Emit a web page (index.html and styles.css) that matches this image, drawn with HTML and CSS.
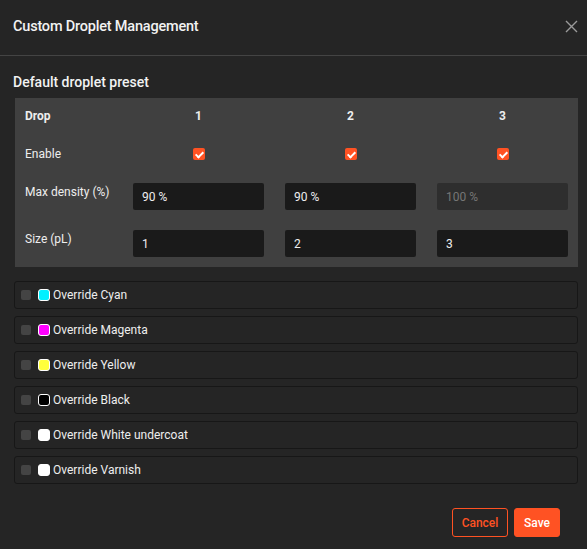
FILE: index.html
```html
<!DOCTYPE html>
<html lang="en">
<head>
    <meta charset="UTF-8">
    <meta name="viewport" content="width=device-width, initial-scale=1.0">
    <title>Custom Droplet Management</title>
    <link rel="stylesheet" href="styles.css">
</head>
<body>
    <div class="dialog">
        <div class="dialog-header">
            <h1 class="dialog-title">Custom Droplet Management</h1>
            <button class="btn-close" aria-label="Close">
                <svg width="13" height="13" viewBox="0 0 13 13">
                    <path d="M1 1 L12 12 M12 1 L1 12" stroke="#9a9a9a" stroke-width="1.4" fill="none"/>
                </svg>
            </button>
        </div>

        <div class="dialog-body">
            <h2 class="section-title">Default droplet preset</h2>

            <div class="preset">
                <div class="cell-label head">Drop</div>
                <div class="cell-center head">1</div>
                <div class="cell-center head">2</div>
                <div class="cell-center head">3</div>

                <div class="cell-label">Enable</div>
                <div class="cell-center"><span class="check on"></span></div>
                <div class="cell-center"><span class="check on"></span></div>
                <div class="cell-center"><span class="check on"></span></div>

                <div class="cell-label top">Max density (%)</div>
                <input class="field" type="text" value="90 %">
                <input class="field" type="text" value="90 %">
                <input class="field" type="text" value="100 %" disabled>

                <div class="cell-label top">Size (pL)</div>
                <input class="field" type="text" value="1">
                <input class="field" type="text" value="2">
                <input class="field" type="text" value="3">
            </div>

            <div class="overrides">
                <div class="override-row">
                    <span class="check"></span>
                    <span class="swatch cyan"></span>
                    <span class="override-name">Override Cyan</span>
                </div>
                <div class="override-row">
                    <span class="check"></span>
                    <span class="swatch magenta"></span>
                    <span class="override-name">Override Magenta</span>
                </div>
                <div class="override-row">
                    <span class="check"></span>
                    <span class="swatch yellow"></span>
                    <span class="override-name">Override Yellow</span>
                </div>
                <div class="override-row">
                    <span class="check"></span>
                    <span class="swatch black"></span>
                    <span class="override-name">Override Black</span>
                </div>
                <div class="override-row">
                    <span class="check"></span>
                    <span class="swatch white"></span>
                    <span class="override-name">Override White undercoat</span>
                </div>
                <div class="override-row">
                    <span class="check"></span>
                    <span class="swatch white"></span>
                    <span class="override-name">Override Varnish</span>
                </div>
            </div>

            <div class="dialog-footer">
                <button class="btn btn-cancel">Cancel</button>
                <button class="btn btn-save">Save</button>
            </div>
        </div>
    </div>
</body>
</html>
```

FILE: styles.css
```css
* {
    margin: 0;
    padding: 0;
    box-sizing: border-box;
}

body {
    font-family: Roboto, "Noto Sans", sans-serif;
    background: #252525;
    color: #eeeeee;
    width: 587px;
    height: 549px;
    overflow: hidden;
}

.dialog-header {
    height: 56px;
    display: flex;
    align-items: center;
    justify-content: space-between;
    padding: 0 9px 3px 13px;
    border-bottom: 1px solid #444444;
}

.dialog-title {
    font-size: 14.5px;
    font-weight: 500;
    letter-spacing: -0.2px;
    color: #f2f2f2;
}

.btn-close {
    background: none;
    border: none;
    width: 13px;
    height: 13px;
    display: flex;
    cursor: pointer;
}

.dialog-body {
    padding: 16px 9px 0 14px;
}

.section-title {
    font-size: 14px;
    font-weight: 500;
    color: #f2f2f2;
    line-height: 20px;
    margin-bottom: 6px;
    margin-left: -1px;
}

.preset {
    margin-left: 1px;
    background: #404040;
    padding: 9px 10px 10px;
    display: grid;
    grid-template-columns: 87px 131px 131px 131px;
    grid-template-rows: 18px 18px 27px 27px;
    column-gap: 21px;
    row-gap: 20px;
    font-size: 12px;
}

.cell-label {
    display: flex;
    align-items: center;
    color: #eeeeee;
    white-space: nowrap;
}

.cell-label.top {
    align-items: flex-start;
    padding-top: 2px;
}

.cell-center {
    display: flex;
    align-items: center;
    justify-content: center;
}

.head {
    font-weight: 700;
}

.check {
    width: 10px;
    height: 10px;
    border-radius: 2px;
    background: #444444;
    flex-shrink: 0;
    position: relative;
}

.check.on {
    width: 12px;
    height: 12px;
    background: #ff5223;
}

.check.on::after {
    content: "";
    position: absolute;
    left: 4px;
    top: 2px;
    width: 3px;
    height: 6px;
    border: solid #ffffff;
    border-width: 0 2px 2px 0;
    transform: rotate(45deg);
}

.field {
    background: #1a1a1a;
    border: none;
    border-radius: 2px;
    color: #eeeeee;
    font-family: inherit;
    font-size: 12px;
    padding: 0 9px;
    outline: none;
    width: 100%;
    min-width: 0;
}

.field:disabled {
    background: #2e2e2e;
    color: #767676;
}

.overrides {
    margin-top: 14px;
    display: flex;
    flex-direction: column;
    gap: 7px;
}

.override-row {
    height: 28px;
    border: 1px solid #171717;
    border-radius: 3px;
    display: flex;
    align-items: center;
    padding-left: 6px;
    font-size: 12px;
}

.swatch {
    width: 12px;
    height: 12px;
    border: 1px solid #ffffff;
    border-radius: 3px;
    margin-left: 7px;
    margin-right: 3px;
}

.cyan { background: #00f0ff; }
.magenta { background: #ff00ff; }
.yellow { background: #ffff3c; }
.black { background: #000000; }
.white { background: #ffffff; }

.override-name {
    color: #eeeeee;
}

.dialog-footer {
    display: flex;
    justify-content: flex-end;
    gap: 6px;
    margin-top: 24px;
    padding-right: 18px;
}

.btn {
    height: 29px;
    border-radius: 3px;
    font-family: inherit;
    font-size: 12px;
    font-weight: 500;
    cursor: pointer;
}

.btn-cancel {
    width: 56px;
    background: transparent;
    border: 1px solid #ff5223;
    color: #ff5223;
}

.btn-save {
    width: 46px;
    background: #ff5223;
    border: 1px solid #ff5223;
    color: #ffffff;
}
```
